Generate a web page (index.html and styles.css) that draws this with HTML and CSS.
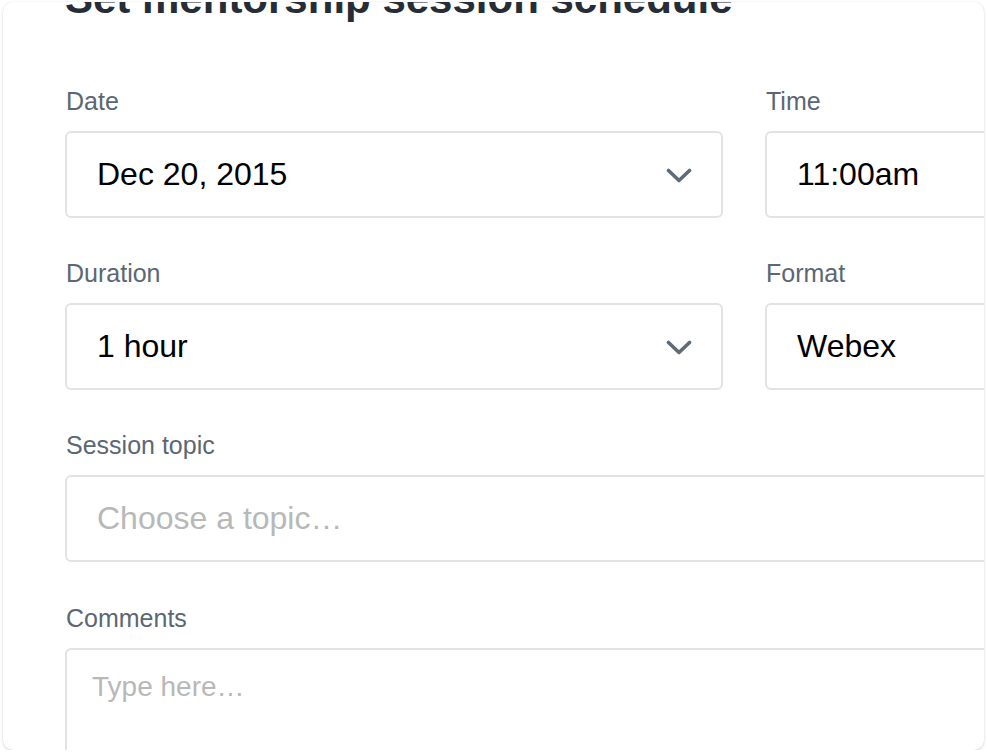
FILE: index.html
```html
<!DOCTYPE html>
<html lang="en">
<head>
<meta charset="utf-8">
<title>Set mentorship session schedule</title>
<link rel="stylesheet" href="styles.css">
</head>
<body>
<div class="card">
  <div class="content">
    <h1 class="title">Set mentorship session schedule</h1>
    <div class="grid">
      <div class="field">
        <div class="label">Date</div>
        <div class="box select"><span class="value">Dec 20, 2015</span>
          <svg class="chev" width="26" height="16" viewBox="0 0 26 16"><polyline points="2.5,2.5 13,12.5 23.5,2.5" fill="none" stroke="#5f6b77" stroke-width="3.6" stroke-linecap="round" stroke-linejoin="round"/></svg>
        </div>
      </div>
      <div class="field">
        <div class="label">Time</div>
        <div class="box"><span class="value">11:00am</span></div>
      </div>
      <div class="field">
        <div class="label">Duration</div>
        <div class="box select"><span class="value">1 hour</span>
          <svg class="chev" width="26" height="16" viewBox="0 0 26 16"><polyline points="2.5,2.5 13,12.5 23.5,2.5" fill="none" stroke="#5f6b77" stroke-width="3.6" stroke-linecap="round" stroke-linejoin="round"/></svg>
        </div>
      </div>
      <div class="field">
        <div class="label">Format</div>
        <div class="box"><span class="value">Webex</span></div>
      </div>
      <div class="field wide">
        <div class="label">Session topic</div>
        <div class="box"><span class="placeholder">Choose a topic…</span></div>
      </div>
      <div class="field wide comments">
        <div class="label">Comments</div>
        <div class="box textarea"><span class="placeholder small">Type here…</span></div>
      </div>
    </div>
  </div>
</div>
</body>
</html>
```
FILE: styles.css
```css
html, body {
  margin: 0;
  padding: 0;
  background: #ffffff;
}
body {
  font-family: "Liberation Sans", Arial, sans-serif;
}
.card {
  margin: 2px 4px 0 3px;
  height: 748px;
  overflow: hidden;
  background: #fff;
  border-radius: 10px;
  box-shadow: 0 1px 3px rgba(0, 0, 0, 0.16), 0 0 1px rgba(0, 0, 0, 0.08);
}
.content {
  width: 1200px;
  padding-left: 62px;
}
.title {
  margin: -27px 0 0 0;
  font-size: 42px;
  font-weight: 700;
  line-height: 48px;
  color: #262d37;
}
.grid {
  display: grid;
  grid-template-columns: 658px 1fr;
  column-gap: 42px;
  row-gap: 41px;
  margin-top: 64px;
}
.field.wide {
  grid-column: 1 / -1;
}
.field.comments {
  margin-top: 1px;
}
.label {
  font-size: 25px;
  line-height: 28px;
  color: #5b6773;
  margin-bottom: 16px;
  padding-left: 1px;
}
.box {
  box-sizing: border-box;
  height: 87px;
  border: 2px solid #e3e3e3;
  border-radius: 6px;
  display: flex;
  align-items: center;
  justify-content: space-between;
  padding: 0 29px 0 30px;
}
.value {
  font-size: 32px;
  color: #000;
}
.placeholder {
  font-size: 32px;
  color: #b8b8b8;
}
.placeholder.small {
  font-size: 28px;
}
.chev {
  display: block;
  margin-top: 2px;
}
.textarea {
  height: 140px;
  align-items: flex-start;
  padding: 21px 25px;
}
```
